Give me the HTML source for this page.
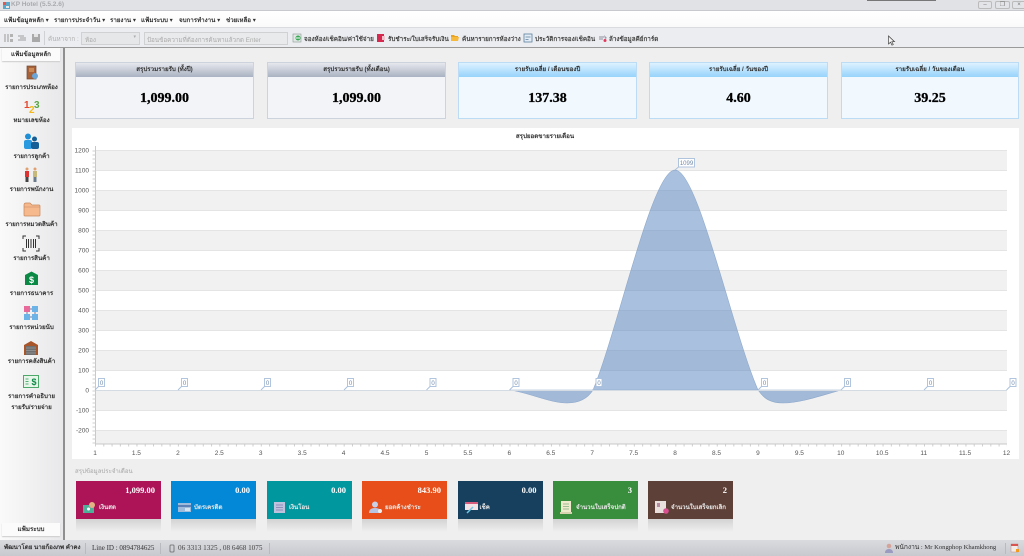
<!DOCTYPE html>
<html lang="th"><head><meta charset="utf-8"><title>KP Hotel</title>
<style>
*{box-sizing:border-box}
html,body{margin:0;padding:0;width:1024px;height:556px;overflow:hidden;background:#efefef}
body{position:relative;font-family:"Liberation Sans","Noto Sans CJK SC","DejaVu Sans",sans-serif;font-size:6.3px;color:#333}
#w{position:absolute;left:0;top:0;width:1024px;height:556px;filter:blur(.35px);overflow:hidden}
.a{position:absolute;white-space:nowrap}
.c{text-align:center}
.card{position:absolute;top:62px;height:57px;border:1px solid #ccd3dc;background:#f2f4f7}
.card .h{height:14px;background:linear-gradient(#e6e8ee,#a9b2c2);text-align:center;line-height:13px;font-size:6.2px;color:#333;font-weight:bold}
.card .v{text-align:center;font:bold 14px "Liberation Serif",serif;color:#000;line-height:43px;-webkit-text-stroke:.3px #000}
.card.b{background:#f1f9ff;border-color:#bcdcf5}
.card.b .h{background:linear-gradient(#def2ff,#96d3fb)}
.sb{position:absolute;left:0;width:63px;text-align:center;font-size:6.2px;color:#333;line-height:11px;font-weight:bold}
.m{position:absolute;top:481px;height:38px;width:85px;color:#fff}
.m:after{content:"";position:absolute;left:0;right:0;top:38px;height:13px;background:linear-gradient(#d3d3d3,#efefef)}
.m b{position:absolute;right:6px;top:4px;font:bold 8.5px "Liberation Serif",serif}
.m span{position:absolute;left:23px;top:21px;font-size:6.1px;white-space:nowrap;font-weight:bold;color:#e6e6e6}
.m svg{position:absolute;left:7px;top:20px}
.mn{position:absolute;top:15px;font-size:6.2px;font-weight:bold;color:#333;white-space:nowrap}
.tb{position:absolute;top:34px;font-size:6.3px;font-weight:bold;color:#444;white-space:nowrap}
.sep{position:absolute;width:1px;background:#b9bac0}
</style></head><body><div id="w">

<!-- title bar -->
<div class="a" style="left:0;top:0;width:1024px;height:11px;background:#e1e2e5;border-bottom:1px solid #c8c9ce"></div>
<svg class="a" style="left:2px;top:1px" width="9" height="9"><rect x="1" y="1" width="7" height="7" fill="#5aa7c9"/><rect x="1" y="1" width="3" height="3" fill="#e0584f"/><rect x="4" y="5" width="3" height="2" fill="#e9e9e9"/></svg>
<div class="a" style="left:11px;top:1px;font-size:6.5px;line-height:8px;font-weight:bold;color:#a9aaae">KP Hotel (5.5.2.6)</div>
<div class="a" style="left:867px;top:0;width:69px;height:1px;background:#777"></div>
<div class="a" style="left:978px;top:1px;width:14px;height:8px;border:1px solid #bbb;border-radius:2px;background:#e3e4e7;font-size:6px;line-height:6px;text-align:center;color:#777">–</div>
<div class="a" style="left:995px;top:1px;width:15px;height:8px;border:1px solid #bbb;border-radius:2px;background:#e3e4e7;font-size:6px;line-height:6px;text-align:center;color:#777">❐</div>
<div class="a" style="left:1012px;top:1px;width:14px;height:8px;border:1px solid #bbb;border-radius:2px;background:#e3e4e7;font-size:6px;line-height:6px;text-align:center;color:#777">×</div>

<!-- menu -->
<div class="a" style="left:0;top:11px;width:1024px;height:17px;background:linear-gradient(#fff,#fafafa);border-bottom:1px solid #dadbde"></div>
<div class="mn" style="left:4px">แฟ้มข้อมูลหลัก ▾</div>
<div class="mn" style="left:54px">รายการประจำวัน ▾</div>
<div class="mn" style="left:110px">รายงาน ▾</div>
<div class="mn" style="left:141px">แฟ้มระบบ ▾</div>
<div class="mn" style="left:179px">จบการทำงาน ▾</div>
<div class="mn" style="left:226px">ช่วยเหลือ ▾</div>

<!-- toolbar -->
<div class="a" style="left:0;top:28px;width:1024px;height:20px;background:#ecedf0;border-bottom:1px solid #9a9a9a"></div>
<svg class="a" style="left:3px;top:33px" width="38" height="11"><path d="M2 1v8M5 1v8" stroke="#a8a8a8" stroke-width="1.2"/><rect x="7" y="1" width="3" height="3" fill="#b3b3b3"/><rect x="7" y="6" width="3" height="3" fill="#b3b3b3"/><path d="M15 3h6M17 5h6M15 7h8" stroke="#b0b0b0" stroke-width="1.3"/><rect x="29" y="1" width="8" height="8" fill="#a9a9a9"/><rect x="31" y="1" width="4" height="3" fill="#e4e4e4"/></svg>
<div class="sep" style="left:44px;top:31px;height:14px;background:#d0d1d4"></div>
<div class="tb" style="left:48px;color:#b0b0b0;font-weight:normal">ค้นหาจาก :</div>
<div class="a" style="left:81px;top:32px;width:59px;height:13px;background:#e6e7e9;border:1px solid #d0d1d3;font-size:6.300px;color:#aaa;padding:2px 3px">ห้อง<span style="position:absolute;right:3px;top:1px;font-size:5px">▾</span></div>
<div class="a" style="left:144px;top:32px;width:144px;height:13px;background:#e9eaec;border:1px solid #d0d1d3;font-size:6.300px;color:#aaa;padding:2px 2px">ป้อนข้อความที่ต้องการค้นหาแล้วกด Enter</div>
<svg class="a" style="left:292px;top:33px" width="10" height="10"><rect x="1" y="1" width="8" height="8" fill="#e2e8e6" stroke="#8a9a94" stroke-width=".6"/><circle cx="6" cy="5" r="2.5" fill="#37a955"/><path d="M4 5h4" stroke="#fff" stroke-width="1"/></svg>
<div class="tb" style="left:304px">จองห้อง/เช็คอิน/ค่าใช้จ่าย</div>
<svg class="a" style="left:376px;top:33px" width="10" height="10"><rect x="1" y="1" width="7" height="8" fill="#d6294f"/><rect x="6" y="3" width="3" height="4" fill="#f0c4cc"/></svg>
<div class="tb" style="left:388px">รับชำระ/ใบเสร็จรับเงิน</div>
<svg class="a" style="left:450px;top:33px" width="10" height="10"><path d="M1 2h3l1 1h3v1H1z" fill="#e9a323"/><path d="M1 4h8l-1 4H1z" fill="#f7b93b"/></svg>
<div class="tb" style="left:462px">ค้นหารายการห้องว่าง</div>
<svg class="a" style="left:523px;top:33px" width="10" height="10"><rect x="1" y="1" width="8" height="8" fill="#e4edf5" stroke="#5b7f9f" stroke-width=".8"/><path d="M2.5 4h5M2.5 6.500h3" stroke="#5b7f9f" stroke-width=".8"/></svg>
<div class="tb" style="left:535px">ประวัติการจอง/เช็คอิน</div>
<svg class="a" style="left:598px;top:33px" width="10" height="10"><path d="M1 4h5M1 6h4" stroke="#8d8d9b" stroke-width="1"/><path d="M6 2l3 3-2 1z" fill="#9a9aa8"/><circle cx="7" cy="7.500" r="1.500" fill="#e2385c"/></svg>
<div class="tb" style="left:609px">ล้างข้อมูลคีย์การ์ด</div>
<!-- cursor -->
<svg class="a" style="left:887px;top:35px" width="9" height="12"><path d="M1.500 1v8l2-1.800 1.500 3 1.300-.7-1.500-2.800h2.700z" fill="#f4f4f4" stroke="#444" stroke-width=".7"/></svg>

<!-- sidebar -->
<div class="a" style="left:0;top:48px;width:63px;height:492px;background:linear-gradient(90deg,#fafafa,#e8e8ea)"></div>
<div class="a" style="left:63px;top:48px;width:2px;height:492px;background:#8f8f8f"></div>
<div class="a c" style="left:2px;top:48px;width:58px;height:13px;background:#fbfbfb;font-size:6.200px;font-weight:bold;line-height:13px;box-shadow:0 1px 1px #ccc">แฟ้มข้อมูลหลัก</div>
<div class="a c" style="left:2px;top:523px;width:58px;height:13px;background:#fbfbfb;font-size:6.200px;font-weight:bold;line-height:13px;box-shadow:0 1px 1px #ccc">แฟ้มระบบ</div>

<svg class="a" style="left:24px;top:65px" width="16" height="16"><rect x="3" y="1" width="9" height="13" fill="#a8623a" stroke="#70492f" stroke-width=".7"/><rect x="5" y="3" width="5" height="4" fill="#c98a58"/><circle cx="11" cy="11" r="3" fill="#6aa6d8"/></svg>
<div class="sb" style="top:82px">รายการประเภทห้อง</div>
<svg class="a" style="left:22px;top:99px" width="20" height="17"><text x="2" y="9" font-family="Liberation Sans" font-weight="bold" font-size="10" fill="#e8452c">1</text><text x="7" y="14" font-family="Liberation Sans" font-weight="bold" font-size="10" fill="#f4b81c">2</text><text x="12" y="9" font-family="Liberation Sans" font-weight="bold" font-size="10" fill="#5aa744">3</text></svg>
<div class="sb" style="top:115px">หมายเลขห้อง</div>
<svg class="a" style="left:23px;top:133px" width="17" height="17"><circle cx="5" cy="3.500" r="3" fill="#1f8fd6"/><rect x="1" y="7" width="8" height="9" rx="2" fill="#2a9ae0"/><circle cx="11.500" cy="6" r="2.500" fill="#155f96"/><rect x="8" y="9" width="8" height="7" rx="2" fill="#155f96"/></svg>
<div class="sb" style="top:151px">รายการลูกค้า</div>
<svg class="a" style="left:23px;top:167px" width="17" height="17"><circle cx="4" cy="2" r="1.500" fill="#e0a070"/><rect x="2" y="4" width="4" height="6" fill="#d33"/><rect x="2.500" y="10" width="3" height="5" fill="#444"/><circle cx="12" cy="2" r="1.500" fill="#e0a070"/><rect x="10" y="4" width="4" height="6" fill="#c6b97a"/><rect x="10.500" y="10" width="3" height="5" fill="#6a7a8a"/></svg>
<div class="sb" style="top:184px">รายการพนักงาน</div>
<svg class="a" style="left:23px;top:202px" width="18" height="15"><path d="M1 3q0-2 2-2h4l2 2h7q1 0 1 1v9q0 1-1 1H2q-1 0-1-1z" fill="#f6b98e" stroke="#c8875c" stroke-width=".7"/><path d="M1 5h16" stroke="#c8875c" stroke-width=".5"/></svg>
<div class="sb" style="top:219px">รายการหมวดสินค้า</div>
<svg class="a" style="left:22px;top:235px" width="18" height="17"><path d="M1 4V1h3M14 1h3v3M1 13v3h3M14 16h3v-3" fill="none" stroke="#333" stroke-width="1"/><path d="M4.500 4v9M6.500 4v9M9 4v9M11.500 4v9M13.500 4v9" stroke="#333" stroke-width="1"/></svg>
<div class="sb" style="top:253px">รายการสินค้า</div>
<svg class="a" style="left:24px;top:271px" width="15" height="15"><path d="M1 4l6.500-3.500L14 4v10H1z" fill="#0b8a45"/><text x="7.500" y="12" text-anchor="middle" font-family="Liberation Sans" font-weight="bold" font-size="9" fill="#fff">$</text></svg>
<div class="sb" style="top:288px">รายการธนาคาร</div>
<svg class="a" style="left:23px;top:305px" width="16" height="16"><rect x="1" y="1" width="6" height="6" fill="#e76a9a"/><rect x="9" y="1" width="6" height="6" fill="#6cb4e8"/><rect x="1" y="9" width="6" height="6" fill="#6cb4e8"/><rect x="9" y="9" width="6" height="6" fill="#6cb4e8"/><path d="M7 4h2M4 7v2M12 7v2M7 12h2" stroke="#7a7a9a"/></svg>
<div class="sb" style="top:322px">รายการหน่วยนับ</div>
<svg class="a" style="left:23px;top:340px" width="16" height="16"><path d="M1 5l7-4 7 4v10H1z" fill="#a8552a"/><rect x="3" y="6" width="10" height="9" fill="#6f6f6f"/><path d="M3 8h10M3 10.500h10M3 13h10" stroke="#999" stroke-width=".7"/></svg>
<div class="sb" style="top:356px">รายการคลังสินค้า</div>
<svg class="a" style="left:23px;top:375px" width="17" height="13"><rect x=".5" y=".5" width="15" height="12" fill="#e8f6ea" stroke="#4ca96a"/><path d="M2.500 4h3M2.500 6.500h3M2.500 9h3" stroke="#59b078" stroke-width="1"/><text x="11" y="10" text-anchor="middle" font-family="Liberation Sans" font-weight="bold" font-size="9" fill="#0b8a45">$</text></svg>
<div class="sb" style="top:391px">รายการคำอธิบาย</div>
<div class="sb" style="top:402px">รายรับ/รายจ่าย</div>

<!-- stat cards -->
<div class="card" style="left:75px;width:179px"><div class="h">สรุปรวมรายรับ (ทั้งปี)</div><div class="v">1,099.00</div></div>
<div class="card" style="left:267px;width:179px"><div class="h">สรุปรวมรายรับ (ทั้งเดือน)</div><div class="v">1,099.00</div></div>
<div class="card b" style="left:458px;width:179px"><div class="h">รายรับเฉลี่ย / เดือนของปี</div><div class="v">137.38</div></div>
<div class="card b" style="left:649px;width:179px"><div class="h">รายรับเฉลี่ย / วันของปี</div><div class="v">4.60</div></div>
<div class="card b" style="left:841px;width:178px"><div class="h">รายรับเฉลี่ย / วันของเดือน</div><div class="v">39.25</div></div>

<!-- chart -->
<svg class="a" style="left:0;top:0" width="1024" height="556" font-family="Liberation Sans, sans-serif">
<rect x="72" y="128" width="947" height="331" fill="#fff"/>
<text x="545" y="138" font-size="6.200" font-weight="bold" fill="#333" text-anchor="middle" font-family="Liberation Sans, Noto Sans CJK SC, DejaVu Sans, sans-serif">สรุปยอดขายรายเดือน</text>
<rect x="95" y="146" width="912" height="298" fill="#fff"/>
<g fill="#f1f1f1">
<rect x="95" y="150" width="912" height="20"/><rect x="95" y="190" width="912" height="20"/><rect x="95" y="230" width="912" height="20"/><rect x="95" y="270" width="912" height="20"/><rect x="95" y="310" width="912" height="20"/><rect x="95" y="350" width="912" height="20"/><rect x="95" y="390" width="912" height="20"/><rect x="95" y="430" width="912" height="14"/>
</g>
<g stroke="#e4e4e4" stroke-width="1">
<path d="M95 150.500H1007M95 170.500H1007M95 190.500H1007M95 210.500H1007M95 230.500H1007M95 250.500H1007M95 270.500H1007M95 290.500H1007M95 310.500H1007M95 330.500H1007M95 350.500H1007M95 370.500H1007M95 410.500H1007M95 430.500H1007"/>
</g>
<path d="M510 390C530 393 550 403 567 403C580 403 588 398 593 390C618 330 652 170 675 170C698 170 732 330 758 390C765 400 772 403 783 403C800 403 820 396 841 390Z" fill="#5b87bf" fill-opacity=".52" stroke="#8fa9cb" stroke-width=".6"/>
<path d="M95 390.500H1007" stroke="#d5dbe3" stroke-width="1"/>
<path d="M95.500 146V444H1007" fill="none" stroke="#c8c8c8" stroke-width="1"/>
<path d="M94 150.500V444" stroke="#cfcfcf" stroke-width="3" stroke-dasharray="1 3"/>
<path d="M95 445.500H1007" stroke="#cfcfcf" stroke-width="2" stroke-dasharray="1 7.290"/>
<g font-size="6.500" fill="#555" text-anchor="end">
<text x="89" y="152.500">1200</text><text x="89" y="172.500">1100</text><text x="89" y="192.500">1000</text><text x="89" y="212.500">900</text><text x="89" y="232.500">800</text><text x="89" y="252.500">700</text><text x="89" y="272.500">600</text><text x="89" y="292.500">500</text><text x="89" y="312.500">400</text><text x="89" y="332.500">300</text><text x="89" y="352.500">200</text><text x="89" y="372.500">100</text><text x="89" y="392.500">0</text><text x="89" y="412.500">-100</text><text x="89" y="432.500">-200</text>
</g>
<g font-size="6.500" fill="#555" text-anchor="middle">
<text x="95" y="455">1</text><text x="136.400" y="455">1.5</text><text x="177.900" y="455">2</text><text x="219.300" y="455">2.5</text><text x="260.700" y="455">3</text><text x="302.200" y="455">3.5</text><text x="343.600" y="455">4</text><text x="385" y="455">4.5</text><text x="426.500" y="455">5</text><text x="467.900" y="455">5.5</text><text x="509.300" y="455">6</text><text x="550.800" y="455">6.5</text><text x="592.200" y="455">7</text><text x="633.600" y="455">7.5</text><text x="675.100" y="455">8</text><text x="716.500" y="455">8.5</text><text x="757.900" y="455">9</text><text x="799.400" y="455">9.5</text><text x="840.800" y="455">10</text><text x="882.200" y="455">10.5</text><text x="923.700" y="455">11</text><text x="965.100" y="455">11.5</text><text x="1006.500" y="455">12</text>
</g>
<!-- data labels -->
<g fill="#fff" stroke="#a9bfdc" stroke-width=".9">
<rect x="98.500" y="378.500" width="6" height="8"/><rect x="181.500" y="378.500" width="6" height="8"/><rect x="264.500" y="378.500" width="6" height="8"/><rect x="347.500" y="378.500" width="6" height="8"/><rect x="430" y="378.500" width="6" height="8"/><rect x="513" y="378.500" width="6" height="8"/><rect x="596" y="378.500" width="6" height="8"/><rect x="761.500" y="378.500" width="6" height="8"/><rect x="844.500" y="378.500" width="6" height="8"/><rect x="927.500" y="378.500" width="6" height="8"/><rect x="1010" y="378.500" width="6" height="8"/><rect x="678.500" y="158.500" width="16" height="8.500"/>
<path fill="none" d="M95 390l3.500-3.500M178 390l3.500-3.500M261 390l3.500-3.500M344 390l3.500-3.500M426.500 390l3.500-3.500M509.500 390l3.500-3.500M592.500 390l3.500-3.500M758 390l3.500-3.500M841 390l3.500-3.500M924 390l3.500-3.500M1006.500 390l3.500-3.500M675 170l3.500-3"/>
</g>
<g font-size="6" fill="#6f87a8" text-anchor="middle">
<text x="101.500" y="385">0</text><text x="184.500" y="385">0</text><text x="267.500" y="385">0</text><text x="350.500" y="385">0</text><text x="433" y="385">0</text><text x="516" y="385">0</text><text x="599" y="385">0</text><text x="764.500" y="385">0</text><text x="847.500" y="385">0</text><text x="930.500" y="385">0</text><text x="1013" y="385">0</text><text x="686.500" y="165">1099</text>
</g>
</svg>

<!-- bottom summary -->
<div class="a" style="left:75px;top:468px;font-size:6.100px;line-height:8px;color:#a5a5a5">สรุปข้อมูลประจำเดือน</div>

<div class="m" style="left:76px;background:#ad1457"><b>1,099.00</b><svg width="14" height="13"><rect x="0" y="4" width="11" height="8" fill="#4fb09a"/><circle cx="9" cy="4" r="3" fill="#e4b184"/><circle cx="5.500" cy="8" r="1.500" fill="#fff"/></svg><span style="left:23px">เงินสด</span></div>
<div class="m" style="left:171px;background:#0288d6"><b>0.00</b><svg width="14" height="13" style="left:7px"><rect x="0" y="2" width="13" height="9" fill="#9ebbdc"/><rect x="0" y="4" width="13" height="2" fill="#5a80b5"/><rect x="7" y="7" width="5" height="3" fill="#d5e2f0"/></svg><span style="left:23px">บัตรเครดิต</span></div>
<div class="m" style="left:267px;background:#00979f"><b>0.00</b><svg width="14" height="13"><rect x="0" y="1" width="11" height="11" fill="#bfc2dd"/><path d="M2 4h7M2 6.500h7M2 9h7" stroke="#8f8fb9"/></svg><span style="left:22px">เงินโอน</span></div>
<div class="m" style="left:362px;background:#e84e19"><b>843.90</b><svg width="14" height="13" style="left:7px"><circle cx="6" cy="3.500" r="3" fill="#c9d1e8"/><path d="M0 12q0-5 6-5t6 5z" fill="#b9c4e2"/><circle cx="11" cy="10" r="2" fill="#eee"/></svg><span style="left:23px">ยอดค้างชำระ</span></div>
<div class="m" style="left:457.500px;background:#17405f"><b>0.00</b><svg width="14" height="13"><rect x="0" y="1" width="13" height="8" fill="#f3e3e7"/><rect x="0" y="1" width="13" height="2" fill="#d65a7c"/><path d="M2 12l6-6" stroke="#71c6e6" stroke-width="1.500"/></svg><span style="left:22px">เช็ค</span></div>
<div class="m" style="left:553px;background:#388e3c"><b>3</b><svg width="14" height="13" style="left:7px"><rect x="1" y="0" width="10" height="11" fill="#efe9cd"/><rect x="0" y="11" width="12" height="2" fill="#d9d2b1"/><path d="M3 3h6M3 5.500h6M3 8h6" stroke="#7fb17f" stroke-width=".8"/></svg><span style="left:23px">จำนวนใบเสร็จปกติ</span></div>
<div class="m" style="left:648px;background:#5d4037;width:85px"><b>2</b><svg width="14" height="13"><rect x="0" y="0" width="11" height="12" fill="#e9dfdc"/><rect x="2" y="2" width="3" height="4" fill="#b68aa0"/><circle cx="11" cy="10" r="2.800" fill="#d94f90"/></svg><span style="left:23px">จำนวนใบเสร็จยกเลิก</span></div>

<!-- status bar -->
<div class="a" style="left:0;top:540px;width:1024px;height:16px;background:linear-gradient(#dadbdf,#c8c9cf)"></div>
<div class="a" style="left:4px;top:544px;font-size:6.200px;line-height:8px;font-weight:bold;color:#333">พัฒนาโดย นายก้องภพ คำคง</div>
<div class="sep" style="left:85px;top:543px;height:11px"></div>
<div class="a" style="left:92px;top:544px;font:7px/8px 'Liberation Serif',serif;color:#333">Line ID : 0894784625</div>
<div class="sep" style="left:160px;top:543px;height:11px"></div>
<svg class="a" style="left:169px;top:544px" width="6" height="9"><rect x="1" y="1" width="4" height="7" rx=".7" fill="none" stroke="#666" stroke-width=".8"/></svg>
<div class="a" style="left:178px;top:544px;font:7.200px/8px 'Liberation Serif',serif;color:#444">06 3313 1325 , 08 6468 1075</div>
<div class="sep" style="left:269px;top:543px;height:11px"></div>
<svg class="a" style="left:884px;top:543px" width="10" height="11"><circle cx="5" cy="3" r="2.300" fill="#d4a39a"/><path d="M1 10q0-4 4-4t4 4z" fill="#9b9bc1"/></svg>
<div class="a" style="left:895px;top:544px;font:6.600px/8px 'Liberation Serif','Noto Sans CJK SC','DejaVu Sans',serif;color:#333">พนักงาน : Mr Kongphop Khamkhong</div>
<div class="sep" style="left:1005px;top:543px;height:11px"></div>
<svg class="a" style="left:1010px;top:543px" width="10" height="11"><rect x="1" y="1" width="7" height="8" fill="#f3ece6" stroke="#b88" stroke-width=".5"/><rect x="1" y="1" width="7" height="2" fill="#d9534f"/><rect x="6" y="6" width="3" height="3" fill="#f29b1f"/></svg>

</div></body></html>
